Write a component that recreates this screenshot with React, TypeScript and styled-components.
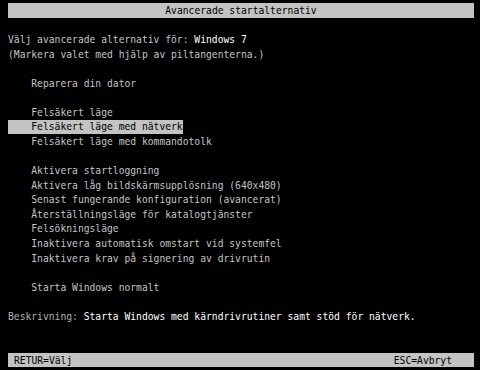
import React, { ReactElement } from 'react';
import styled, { createGlobalStyle } from 'styled-components';

const ROW = 14.58;

const GlobalStyle = createGlobalStyle`
  html, body {
    background: #000;
    margin: 0;
    padding: 0;
  }
`;

const Screen = styled.div`
  background: #000;
  box-sizing: border-box;
  color: #c4c4c4;
  display: flex;
  flex-direction: column;
  font-family: 'DejaVu Sans Mono', 'Liberation Mono', monospace;
  font-size: 9.68px;
  height: 370px;
  padding: 3px 6px 0 8px;
  width: 480px;
`;

const Bar = styled.div<{ $center?: boolean }>`
  align-items: center;
  background: #c3c3c3;
  color: #000;
  display: flex;
  height: ${ROW}px;
  justify-content: ${(p) => (p.$center ? 'center' : 'space-between')};
  padding: ${(p) => (p.$center ? '0' : '0 22px 0 6px')};
  white-space: pre;
`;

const Line = styled.div<{ $indent?: boolean }>`
  align-items: center;
  display: flex;
  height: ${ROW}px;
  padding-left: ${(p) => (p.$indent ? '23.3px' : '0')};
  white-space: pre;
`;

const Selected = styled.span`
  background: #c3c3c3;
  color: #000;
  line-height: ${ROW}px;
  margin-left: -23.3px;
  padding-left: 23.3px;
`;

const Bright = styled.span`
  color: #fff;
`;

const Label = styled.span`
  color: #b0b0b0;
`;

const Spacer = styled.div<{ $rows: number }>`
  flex: none;
  height: ${(p) => p.$rows * ROW}px;
`;

const groups: string[][] = [
  ['Reparera din dator'],
  [
    'Felsäkert läge',
    'Felsäkert läge med nätverk',
    'Felsäkert läge med kommandotolk',
  ],
  [
    'Aktivera startloggning',
    'Aktivera låg bildskärmsupplösning (640x480)',
    'Senast fungerande konfiguration (avancerat)',
    'Återställningsläge för katalogtjänster',
    'Felsökningsläge',
    'Inaktivera automatisk omstart vid systemfel',
    'Inaktivera krav på signering av drivrutin',
  ],
  ['Starta Windows normalt'],
];

const SELECTED = 'Felsäkert läge med nätverk';

export default function App(): ReactElement {
  return (
    <>
      <GlobalStyle />
      <Screen>
        <Bar $center>Avancerade startalternativ</Bar>
        <Spacer $rows={1} />
        <Line>
          Välj avancerade alternativ för: <Bright>Windows 7</Bright>
        </Line>
        <Line>(Markera valet med hjälp av piltangenterna.)</Line>
        {groups.map(
          (group: string[], i: number): ReactElement => (
            <React.Fragment key={i}>
              <Spacer $rows={1} />
              {group.map(
                (item: string): ReactElement => (
                  <Line $indent key={item}>
                    {item === SELECTED ? <Selected>{item}</Selected> : item}
                  </Line>
                ),
              )}
            </React.Fragment>
          ),
        )}
        <Spacer $rows={1} />
        <Line>
          <Label>Beskrivning: </Label>
          <Bright>Starta Windows med kärndrivrutiner samt stöd för nätverk.</Bright>
        </Line>
        <Spacer $rows={2} />
        <Bar>
          <span>RETUR=Välj</span>
          <span>ESC=Avbryt</span>
        </Bar>
      </Screen>
    </>
  );
}
